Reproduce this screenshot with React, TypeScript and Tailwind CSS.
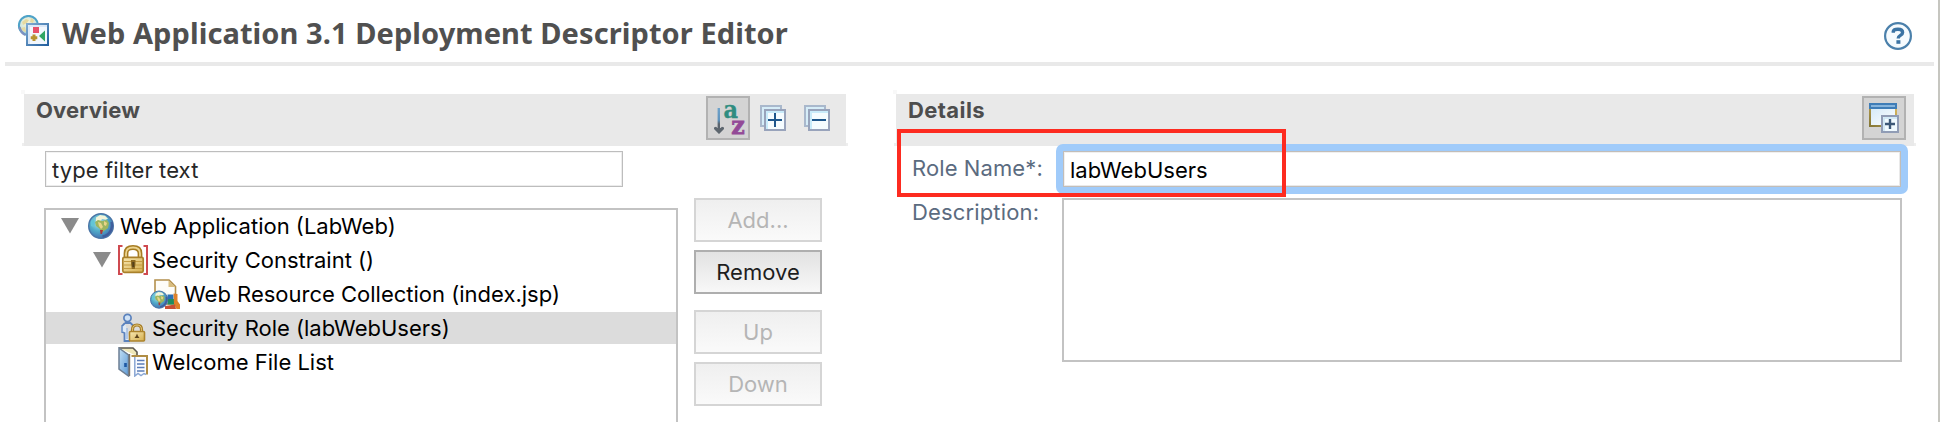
import type { ReactNode } from "react";

function EditorIcon() {
  return (
    <svg width="32" height="32" viewBox="0 0 32 32">
      <defs>
        <linearGradient id="edFrame" x1="0" y1="0" x2="1" y2="1">
          <stop offset="0" stopColor="#7fa9d0" />
          <stop offset="1" stopColor="#23609f" />
        </linearGradient>
        <radialGradient id="edGlobe" cx="0.45" cy="0.35" r="0.7">
          <stop offset="0" stopColor="#f6f4dc" />
          <stop offset="0.6" stopColor="#d3e6da" />
          <stop offset="1" stopColor="#7ab8d8" />
        </radialGradient>
      </defs>
      <circle cx="11.5" cy="10.5" r="9.6" fill="url(#edGlobe)" stroke="#4fa3c8" strokeWidth="2" />
      <path d="M5 7l4-3 3 1-2 3-4 2zM14 3l3 2-1 3-3-1zM4 13l4-1 1 5-3-1z" fill="#e6d9a0" />
      <path d="M2.5 12c1 4 2.500 6.500 6 8" stroke="#7f90c0" strokeWidth="2.200" fill="none" />
      <rect x="10" y="9" width="21" height="21" fill="#f2f7fd" stroke="url(#edFrame)" strokeWidth="2" />
      <path d="M12 29V11h18" stroke="#d5e4f5" strokeWidth="1.500" fill="none" />
      <rect x="16" y="12" width="6" height="6" fill="#e8506a" />
      <path d="M28 15.500v11l-6-5.500z" fill="#2fa562" />
      <path d="M15.500 19.500h3v1.800h1.800v3h-1.800V26h-3v-1.700h-1.800v-3h1.800z" fill="#b8922e" />
    </svg>
  );
}

function HelpIcon() {
  return (
    <svg width="28" height="28" viewBox="0 0 28 28">
      <circle cx="14" cy="14" r="12.900" fill="#f6fbfe" stroke="#4b80ab" strokeWidth="2.200" />
      <path d="M9.300 10.800V9.300c.3-1.400 2-2 4.600-2 3 0 4.700 1 4.700 3.100 0 3.400-4.400 2.600-4.400 6" fill="none" stroke="#3c74a4" strokeWidth="3.400" />
      <rect x="12.400" y="18.200" width="4" height="3.600" fill="#3c74a4" />
    </svg>
  );
}

function SortIcon() {
  return (
    <svg width="40" height="40" viewBox="0 0 40 40" className="overflow-visible">
      <defs>
        <linearGradient id="sortArrow" x1="0" y1="0" x2="0" y2="1">
          <stop offset="0" stopColor="#6fa3cb" />
          <stop offset="0.600" stopColor="#5f93bd" />
          <stop offset="0.800" stopColor="#5a646e" />
        </linearGradient>
      </defs>
      <rect x="9.600" y="10" width="2.400" height="20" fill="url(#sortArrow)" />
      <path d="M6 29.500l2-.8 1.500 1.300h3l1.500-1.300 2 .8v1.500L11 36l-5-5z" fill="#5d666e" />
      <text x="15.500" y="19.600" fontFamily="'DejaVu Serif', serif" fontWeight="bold" fontSize="24" textLength="14.500" lengthAdjust="spacingAndGlyphs" fill="#2f8d80" stroke="#2f8d80" strokeWidth="0.400">a</text>
      <text x="23.200" y="35.800" fontFamily="'DejaVu Serif', serif" fontWeight="bold" fontSize="24.500" textLength="13.500" lengthAdjust="spacingAndGlyphs" fill="#934a97" stroke="#934a97" strokeWidth="0.800">z</text>
    </svg>
  );
}

function StackIcon({ plus }: { plus?: boolean }) {
  return (
    <svg width="26" height="26" viewBox="0 0 26 26">
      <rect x="1" y="1" width="20" height="20" fill="#d6edf8" stroke="#a9b8cc" strokeWidth="2" />
      <rect x="5" y="5" width="20" height="20" fill="#f5fcff" stroke="#98a3bb" strokeWidth="2" />
      <path d="M7 24V7h17" stroke="#c9ebfa" strokeWidth="2" fill="none" />
      <rect x="8" y="14" width="14" height="2" fill="#1d568c" />
      {plus && <rect x="14" y="8" width="2" height="14" fill="#1d568c" />}
    </svg>
  );
}

function NewWindowIcon() {
  return (
    <svg width="30" height="30" viewBox="0 0 30 30">
      <defs>
        <linearGradient id="winEdge" x1="1" y1="0" x2="0" y2="1">
          <stop offset="0" stopColor="#d8b75d" />
          <stop offset="1" stopColor="#857838" />
        </linearGradient>
        <linearGradient id="winFill" x1="0" y1="0" x2="1" y2="1">
          <stop offset="0" stopColor="#d3e9f8" />
          <stop offset="1" stopColor="#ffffff" />
        </linearGradient>
      </defs>
      <rect x="1" y="4" width="26" height="19" fill="url(#winFill)" stroke="url(#winEdge)" strokeWidth="2" />
      <rect x="0" y="0" width="28" height="6" fill="#3f7db7" />
      <rect x="2" y="2" width="24" height="2" fill="#86b4dc" />
      <rect x="13" y="13" width="16" height="16" fill="#f0faff" stroke="#909cb5" strokeWidth="2" />
      <path d="M15 28V15h13" stroke="#c8e4f4" strokeWidth="1.500" fill="none" />
      <path d="M16 21h10M21 16v10" stroke="#3c5878" strokeWidth="2.400" />
    </svg>
  );
}

function Globe() {
  return (
    <g>
      <circle cx="13" cy="13" r="12.300" fill="url(#globeFill)" stroke="#4a74a6" strokeWidth="1.400" />
      <path d="M8 4.500l4-2.500 5 .8 3 3-2.500 1L14 6l-2 3-4-1z" fill="#f3f4d8" />
      <path d="M7 9l3-2 4 1 5-1 2 3-1 5-4 3-3 2-1-4-4-3z" fill="#9cb560" />
      <path d="M10 9l3 1 2 4-2 2-2-3zM16 8l3 2-1 3-2-1z" fill="#e9d488" />
      <path d="M3 8l3-2 1 4-1 4-3-1z" fill="#63c5d6" />
      <path d="M12 17h3l-1 4h-1.500z" fill="#a8383a" />
      <path d="M23.500 9c1.500 7-2 13-9 14.500" stroke="#3f5596" strokeWidth="2.400" fill="none" opacity="0.800" />
    </g>
  );
}

function SharedDefs() {
  return (
    <defs>
      <radialGradient id="globeFill" cx="0.400" cy="0.350" r="0.700">
        <stop offset="0" stopColor="#b5e6e8" />
        <stop offset="0.500" stopColor="#52adc9" />
        <stop offset="1" stopColor="#3f6bb0" />
      </radialGradient>
      <linearGradient id="goldFill" x1="0" y1="0" x2="1" y2="1">
        <stop offset="0" stopColor="#f8e9b4" />
        <stop offset="1" stopColor="#d4ad4c" />
      </linearGradient>
      <linearGradient id="doorFill" x1="0" y1="0" x2="1" y2="1">
        <stop offset="0" stopColor="#c4e0f5" />
        <stop offset="1" stopColor="#5c9ad6" />
      </linearGradient>
    </defs>
  );
}

function GlobeIcon() {
  return (
    <svg width="26" height="26" viewBox="0 0 26 26">
      <SharedDefs />
      <Globe />
    </svg>
  );
}

function ConstraintIcon() {
  return (
    <svg width="30" height="30" viewBox="0 0 30 30">
      <path d="M4.500 1H1v28h3.500M25.500 1H29v28h-3.500" fill="none" stroke="#cf4a50" strokeWidth="2" />
      <path d="M8 14V8.500C8 4.500 10.500 2.500 15 2.500s7 2 7 6V14" fill="none" stroke="#a77c22" strokeWidth="4.800" />
      <path d="M8 14V8.500C8 4.500 10.500 2.500 15 2.500s7 2 7 6V14" fill="none" stroke="#ecd591" strokeWidth="1.800" />
      <rect x="4.800" y="12.300" width="20.400" height="15" rx="1.500" fill="url(#goldFill)" stroke="#a9802a" strokeWidth="1.700" />
      <path d="M6 16.500h18M6 20h18M6 23.500h18" stroke="#c49c42" strokeWidth="1" />
      <path d="M13 15h4.500v3.500L16.800 24h-3l-.8-5.500z" fill="#8d6a22" />
      <rect x="14.300" y="17" width="2" height="5" fill="#54401a" />
    </svg>
  );
}

function ResourceIcon() {
  return (
    <svg width="30" height="30" viewBox="0 0 30 30">
      <path d="M5 16V1h14l6.500 6.500V25H8z" fill="#fdfcf8" stroke="#b38f4c" strokeWidth="1.600" />
      <path d="M18.500 1.500V8h7z" fill="#d9bd7f" />
      <rect x="17.500" y="15.500" width="6" height="5" fill="#2a6fb4" />
      <rect x="17.500" y="20" width="7.500" height="5.500" fill="#1f8c62" />
      <path d="M23.500 14.500l4 .5v7L30 25.500V30h-3.500L24 25z" fill="#df8128" />
      <path d="M15 27l10-1.500 1 4.500H15z" fill="#c94f35" />
      <g transform="translate(0 11.500) scale(0.700)"><Globe /></g>
    </svg>
  );
}

function RoleIcon() {
  return (
    <svg width="26" height="30" viewBox="0 0 26 30">
      <circle cx="7.500" cy="5" r="3.600" fill="#cfe2f6" stroke="#5b82bd" strokeWidth="1.700" />
      <path d="M5 10h5.500l2.500 2.500M5 10L2 13v6l2.500 1v8H10" fill="#deebf9" stroke="#5b82bd" strokeWidth="1.800" />
      <path d="M2 13v6M7 15v11" stroke="#93b2dc" strokeWidth="1.200" />
      <path d="M12.500 20v-3.500C12.500 13.500 14.500 12 17 12s4.500 1.500 4.500 4.500V20" fill="none" stroke="#a87e27" strokeWidth="3.200" />
      <path d="M12.500 20v-3.500C12.500 13.500 14.500 12 17 12s4.500 1.500 4.500 4.500V20" fill="none" stroke="#e5ca7e" strokeWidth="1" />
      <rect x="9.500" y="18.500" width="15" height="9.500" rx="1" fill="url(#goldFill)" stroke="#ac832c" strokeWidth="1.600" />
      <path d="M17 20.500l1 2.500 1.500 2h-5l1.500-2z" fill="#5d431a" />
    </svg>
  );
}

function WelcomeIcon() {
  return (
    <svg width="30" height="30" viewBox="0 0 30 30">
      <path d="M1 1h14l4 4v4" fill="#efe7b8" stroke="#5b574e" strokeWidth="1.600" />
      <path d="M1 1l9.500 7v21L1 22z" fill="url(#doorFill)" stroke="#6d7f94" strokeWidth="1.500" />
      <path d="M11.500 7v22" stroke="#77716a" strokeWidth="1.400" />
      <rect x="6.200" y="16" width="2.600" height="4" fill="#1f59a4" />
      <path d="M17.500 26V9H29v19l-3-1.500-3 2-3-2-3.500 2.500z" fill="#fbfcff" />
      <path d="M13.500 9H29v18.500" fill="none" stroke="#b08d45" strokeWidth="2" />
      <path d="M16.800 10v19l3.200-2.500 3 2 3-2 2 1" fill="none" stroke="#8aa7d4" strokeWidth="1.500" />
      <path d="M19 13.500h7.500M19 17h7.500M19 20.500h7.500M19 24h7.500" stroke="#5c7db8" strokeWidth="1.500" />
    </svg>
  );
}

function Twisty() {
  return (
    <svg width="18" height="16" viewBox="0 0 18 16">
      <path d="M0 0h18L9 15.500z" fill="#8b8b8b" />
    </svg>
  );
}

function SectionBar({ title, titleClass, children }: { title: string; titleClass: string; children: ReactNode }) {
  return (
    <div className="relative flex h-[52px] items-start justify-between bg-[#e9e9e9]">
      <span className="absolute -top-1 -left-[3px] size-1 bg-[#f8f8f8]" />
      <span className="absolute bottom-0 -left-0.5 h-[3px] w-0.5 bg-[#eeeeee]" />
      <span className="absolute -right-0.5 bottom-0 h-[3px] w-0.5 bg-[#eeeeee]" />
      <h2 className={`text-[22px] leading-8 font-bold text-[#4d4d4d] ${titleClass}`}>{title}</h2>
      {children}
    </div>
  );
}

function TreeRow({ indent, open, icon, label, selected }: { indent: string; open?: boolean; icon: ReactNode; label: string; selected?: boolean }) {
  return (
    <div className={`flex h-8 items-center whitespace-nowrap ${indent} ${selected ? "bg-[#dcdcdc]" : ""}`}>
      <span className="flex w-[25px] shrink-0">{open && <Twisty />}</span>
      <span className="mr-1 flex w-[30px] shrink-0 justify-center">{icon}</span>
      <span>{label}</span>
    </div>
  );
}

function PushButton({ label, enabled }: { label: string; enabled?: boolean }) {
  return (
    <button
      disabled={!enabled}
      className={`flex h-11 w-32 items-center justify-center border-2 bg-linear-to-b ${
        enabled
          ? "border-[#aeaeae] from-[#e2e2e2] to-[#f8f8f8] text-[#1e1e1e]"
          : "border-[#d5d5d5] from-[#efefef] to-[#fafafa] text-[#b5b5b5]"
      }`}
    >
      {label}
    </button>
  );
}

export default function App() {
  return (
    <div className="h-[422px] w-full overflow-hidden border-r-2 border-[#c6c6c0] bg-white font-['Inter','Liberation_Sans',sans-serif] text-[22px] leading-8 text-black">
      <header className="mr-1 ml-[5px] flex h-[66px] items-start justify-between border-b-4 border-[#e9e9e9] pr-[22px] pl-3">
        <div className="flex">
          <div className="mt-[15px]">
            <EditorIcon />
          </div>
          <h1 className="mt-[13px] ml-[13px] font-['Noto_Sans','Open_Sans',sans-serif] text-[29px] leading-10 font-bold tracking-[0.08px] text-[#505050]">
            Web Application 3.1 Deployment Descriptor Editor
          </h1>
        </div>
        <div className="mt-[22px]">
          <HelpIcon />
        </div>
      </header>

      <main className="flex pt-7 pl-6">
        <section className="w-[822px]">
          <SectionBar title="Overview" titleClass="ml-3 tracking-[0.15px]">
            <div className="mt-0.5 mr-4 flex items-center">
              <button className="flex size-11 items-center justify-center border-2 border-[#b2b2b2] bg-[#d4d4d4]">
                <SortIcon />
              </button>
              <button className="ml-2.5">
                <StackIcon plus />
              </button>
              <button className="ml-[18px]">
                <StackIcon />
              </button>
            </div>
          </SectionBar>
          <input
            readOnly
            value="type filter text"
            className="mt-[5px] ml-[21px] block h-9 w-[578px] border border-[#bdbdbd] bg-white pt-0.5 pl-1.5 tracking-[0.1px] text-[#262626] shadow-[inset_-1px_-1px_0_#ececec,inset_1px_1px_0_#f3f3f3] outline-none"
          />
          <div className="mt-[21px] flex">
            <div className="ml-5 flex h-[240px] w-[634px] flex-col gap-0.5 border-2 border-[#c3c3c3]">
              <TreeRow indent="pl-[15px]" open icon={<GlobeIcon />} label="Web Application (LabWeb)" />
              <TreeRow indent="pl-[47px]" open icon={<ConstraintIcon />} label="Security Constraint ()" />
              <TreeRow indent="pl-[79px]" icon={<ResourceIcon />} label="Web Resource Collection (index.jsp)" />
              <TreeRow indent="pl-[47px]" icon={<RoleIcon />} label="Security Role (labWebUsers)" selected />
              <TreeRow indent="pl-[47px]" icon={<WelcomeIcon />} label="Welcome File List" />
            </div>
            <div className="-mt-2.5 ml-4 flex flex-col gap-4">
              <div className="flex flex-col gap-2">
                <PushButton label="Add..." />
                <PushButton label="Remove" enabled />
              </div>
              <div className="flex flex-col gap-2">
                <PushButton label="Up" />
                <PushButton label="Down" />
              </div>
            </div>
          </div>
        </section>

        <section className="relative ml-[50px] w-[1018px]">
          <SectionBar title="Details" titleClass="ml-3 tracking-[0.4px]">
            <button className="mt-0.5 mr-2 flex size-11 items-center justify-center border-2 border-[#b2b2b2] bg-[#d4d4d4]">
              <NewWindowIcon />
            </button>
          </SectionBar>
          <div className="mt-[5px] flex">
            <label className="mt-px ml-4 w-[151px] tracking-[0.1px] text-[#5b6b80]">Role Name*:</label>
            <div className="relative -m-[7px] rounded-[7px] bg-[#a0cbfa] p-[7px]">
              <input
                readOnly
                value="labWebUsers"
                className="block h-9 w-[838px] border border-[#c2bdb8] bg-white pt-0.5 pl-1.5 shadow-[inset_-1px_-1px_0_#e9e9e9,inset_1px_1px_0_#f0f0f0] outline-none"
              />
            </div>
          </div>
          <div className="mt-[11px] flex">
            <label className="-mt-0.5 ml-4 w-[150px] tracking-[0.15px] text-[#5b6b80]">Description:</label>
            <textarea readOnly className="block h-[164px] w-[840px] resize-none border-2 border-[#c3c3c3] outline-none" />
          </div>
          <div className="absolute top-[35px] left-px h-[68px] w-[389px] border-4 border-[#fd2b20]" />
        </section>
      </main>
    </div>
  );
}
